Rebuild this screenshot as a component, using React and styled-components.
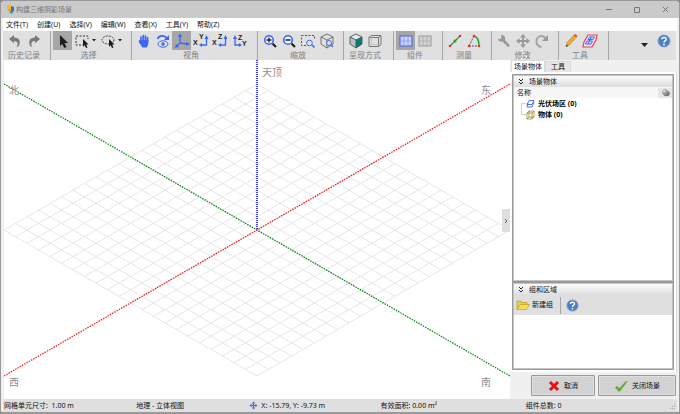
import React, { useState } from 'react';
import styled, { createGlobalStyle, css } from 'styled-components';

const GlobalStyle = createGlobalStyle`
  * { box-sizing: border-box; }
  body { margin: 0; background: #8c8c8c; }
  button, input { font: inherit; color: inherit; }
`;

const Shell = styled.div`
  min-height: 100vh;
  display: flex;
  flex-direction: column;
  border: 1px solid #999;
  border-bottom-width: 2px;
  border-radius: 5px 5px 3px 3px;
  overflow: hidden;
  background: #f0f0f0;
  color: #111;
  font: 7px/10px "Noto Sans", "Noto Sans CJK SC", sans-serif;
`;

const TitleBar = styled.header`
  display: flex;
  align-items: center;
  height: 17px;
  padding: 0 0 0 5px;
  gap: 1px;
  background: #cacaca;
  color: #777;
`;
const Title = styled.h1`
  flex: 1;
  margin: 0;
  font-size: 7px;
  font-weight: 400;
`;
const WindowButton = styled.button`
  display: grid;
  place-items: center;
  width: 27px;
  height: 17px;
  padding: 0;
  border: 0;
  background: none;
`;

const MenuBar = styled.nav`
  display: flex;
  align-items: center;
  gap: 9px;
  height: 13px;
  margin: 0 2px;
  padding: 0 3px;
  background: #fff;
`;
const MenuItem = styled.button`
  padding: 0;
  border: 0;
  background: none;
  white-space: nowrap;
  line-height: 12px;
`;

const ToolBar = styled.div`
  display: flex;
  height: 29px;
  margin: 0 3px 0 2px;
  background: #e0e0e0;
`;
const Group = styled.div`
  flex: none;
  padding: 0 ${(p) => p.$end}px 0 2px;
  border-right: 1px solid #a5a5a5;
`;
const GroupTools = styled.div`
  display: flex;
  height: 19px;
`;
const GroupLabel = styled.div`
  font-size: 8px;
  line-height: 9px;
  text-align: center;
  color: #808080;
`;
const ToolButton = styled.button`
  display: flex;
  align-items: center;
  justify-content: center;
  width: 19px;
  height: 19px;
  padding: 0;
  border: 0;
  background: none;
  ${(p) => p.$split && css`width: 26px; gap: 3px;`}
  ${(p) => p.$active && css`background: #a6a6a6;`}
`;
const ToolEnd = styled.div`
  display: flex;
  align-items: center;
  margin-left: auto;
  padding: 0 3px 10px 0;
`;

const Main = styled.main`
  flex: 1;
  display: flex;
  margin: 0 2px;
`;
const View = styled.section`
  flex: 1;
  position: relative;
  min-width: 0;
  margin-left: 1px;
  background: #fff;
`;
const Scene = styled.svg`
  display: block;
  width: 100%;
  height: 100%;
`;
const AxisName = styled.text`
  font: 10px "Noto Sans CJK SC", sans-serif;
  fill: #8e8e8e;
`;
const Collapse = styled.button`
  position: absolute;
  right: 0;
  top: 44%;
  display: grid;
  place-items: center;
  width: 8px;
  height: 23px;
  padding: 0;
  border: 0;
  background: #dedede;
`;

const Side = styled.aside`
  display: flex;
  flex-direction: column;
  width: 167px;
`;
const Tabs = styled.div`
  display: flex;
  align-items: flex-end;
  height: 12px;
  padding-left: 1px;
`;
const Tab = styled.button`
  height: ${(p) => (p.$active ? 12 : 11)}px;
  padding: 0 ${(p) => (p.$active ? 2 : 5)}px;
  border: 1px solid #dcdcdc;
  border-bottom: 0;
  background: ${(p) => (p.$active ? '#fff' : '#e6e6e6')};
  line-height: 10px;
`;
const TabPage = styled.div`
  flex: 1;
  display: flex;
  flex-direction: column;
  padding: 2px;
  background: #fff;
  border-right: 1px solid #dcdcdc;
`;
const Panel = styled.section`
  display: flex;
  flex-direction: column;
  flex: ${(p) => p.$grow} 0 0;
  border: 1px solid #999;
  outline: 1px solid #c4c4c4;
  outline-offset: -2px;
  padding: 1px;
  background: #fff;
`;
const PanelTitle = styled.h2`
  display: flex;
  align-items: center;
  gap: 5px;
  height: 11px;
  margin: 0;
  padding: 0 4px;
  font-size: 7px;
  font-weight: 400;
  background: linear-gradient(#fbfbfb, #dedede);
`;
const ColumnHead = styled.div`
  display: flex;
  justify-content: space-between;
  align-items: center;
  height: 11px;
  padding: 0 3px;
  background: #f7f7f7;
`;
const HeadMark = styled.span`
  display: grid;
  place-items: center;
  width: 14px;
  height: 10px;
  margin-right: -3px;
  background: #e6e6e6;
`;
const Tree = styled.ul`
  margin: 0 0 0 7px;
  padding: 0;
  list-style: none;
  font-weight: 700;
  color: #000;
`;
const TreeItem = styled.li`
  display: flex;
  align-items: center;
  height: 11px;
  gap: 3px;
`;
const GroupBar = styled.div`
  display: flex;
  align-items: center;
  height: 20px;
  background: #dfdfdf;
`;
const NewGroup = styled.button`
  display: flex;
  align-items: center;
  gap: 2px;
  height: 17px;
  padding: 0 7px 0 2px;
  border: 0;
  border-right: 1px solid #a5a5a5;
  background: none;
`;
const HelpButton = styled.button`
  display: grid;
  padding: 0;
  margin: 0 0 0 5px;
  border: 0;
  background: none;
`;
const Actions = styled.div`
  display: flex;
  justify-content: flex-end;
  gap: 3px;
  padding: 3px 1px 3px 0;
`;
const ActionButton = styled.button`
  display: flex;
  align-items: center;
  gap: 4px;
  height: 21px;
  padding: 0 ${(p) => p.$pad}px;
  border: 1px solid #999;
  border-radius: 1px;
  background: #d2d2d2;
  box-shadow: inset 0 0 0 1px #dfdfdf;
  white-space: nowrap;
`;

const StatusBar = styled.footer`
  display: grid;
  grid-template-columns: 132fr 113fr 131fr 145fr 151fr;
  align-items: center;
  height: 13px;
  margin: 0 2px;
  padding-left: 1px;
  background: #dfdfdf;
  white-space: nowrap;
`;
const StatusCell = styled.span`
  display: flex;
  align-items: center;
  gap: 3px;
  line-height: 12px;
`;
const Grip = styled.svg`
  margin: 3px 2px 0 auto;
`;

const BLUE = '#3b67f5';
const Svg = ({ w = 16, h = 16, box, children }) => (
  <svg width={w} height={h} viewBox={box || `0 0 ${w} ${h}`} fill="none" aria-hidden="true">
    {children}
  </svg>
);

const Logo = () => (
  <Svg w={9} h={11} box="0 0 9 11">
    <path d="M1 1h4v4H1z" fill="#f7bd28" />
    <path d="M5 2l3 1v4L5 9z" fill="#3b6fae" />
    <path d="M1 5h4v4z" fill="#ef9d17" />
    <path d="M3 8l5-2-2 4z" fill="#2c92d0" />
  </Svg>
);
const Caret = () => <Svg w={4} h={3}><path d="M0 0h4L2 2.5z" fill="#222" /></Svg>;
const Undo = ({ flip }) => (
  <Svg>
    <g transform={flip ? 'translate(16 0) scale(-1 1)' : undefined}>
      <path d="M2 6l5-4v2.6c5 .2 7 3 5 8.2l-2.4 1.8c2-4.4 1-6.6-2.6-6.7v2.3z" fill="#7a7a7a" />
    </g>
  </Svg>
);
const Pointer = ({ x = 5, y = 2, s = 1 }) => (
  <path transform={`translate(${x} ${y}) scale(${s})`} d="M0 0v11l2.3-2 2 4 2.2-1-2-4H8z" fill="#1c1c18" />
);
const Arrow = () => <Svg><Pointer /></Svg>;
const RectSelect = () => (
  <Svg w={14} h={16} box="0 0 14 16">
    <rect x="1" y="3" width="12" height="9" stroke="#333" strokeDasharray="2 1.5" />
    <path d="M8 6h6v9H8z" fill="#e0e0e0" />
    <Pointer x={8} y={6} s={0.7} />
  </Svg>
);
const EllipseSelect = () => (
  <Svg w={14} h={16} box="0 0 14 16">
    <ellipse cx="7" cy="7" rx="6" ry="4" stroke="#444" strokeDasharray="2 1" />
    <path d="M8 7h4v8H8z" fill="#e0e0e0" />
    <Pointer x={8} y={6} s={0.7} />
  </Svg>
);
const Hand = () => (
  <Svg>
    <path d="M5 8V4M7.2 7.5V2.500M9.400 7.500V3M11.500 8.500V4.500M5 10L3.500 8" stroke={BLUE} strokeWidth="1.700" strokeLinecap="round" />
    <path d="M4.200 7h8.100v4l-1.500 3.500H6.500L3 9.500z" fill={BLUE} />
  </Svg>
);
const Orbit = () => (
  <Svg>
    <path d="M2.500 6c1.500-4 7.500-4 9-1" stroke={BLUE} strokeWidth="1.800" />
    <path d="M14 2v5H9z" fill={BLUE} />
    <ellipse cx="8" cy="11" rx="5" ry="3.200" stroke={BLUE} />
    <circle cx="8" cy="11" r="1.700" fill={BLUE} />
  </Svg>
);
const Axes = () => (
  <Svg>
    <path d="M6 3v7l8 1M6 10l-3 3" stroke={BLUE} strokeWidth="1.300" />
    <path d="M6 0L4 4h4zM16 11l-4-2v4zM1 15l1-4 3 3z" fill={BLUE} />
  </Svg>
);
const axisText = { fontFamily: 'Liberation Sans, sans-serif', fontWeight: 700, fill: '#222' };
const PlaneAxes = ({ a, b, left }) => (
  <Svg>
    {left ? (
      <>
        <path d="M4 5v7h5" stroke={BLUE} strokeWidth="1.300" />
        <path d="M4 2L2 6h4zM11 12l-3-2v4z" fill={BLUE} />
        <text x="7" y="7" fontSize="7" {...axisText}>{a}</text>
        <text x="11" y="13" fontSize="7" {...axisText}>{b}</text>
      </>
    ) : (
      <>
        <path d="M13.500 5v7H8" stroke={BLUE} strokeWidth="1.300" />
        <path d="M13.500 2l-2 4h4zM6 12l3-2v4z" fill={BLUE} />
        <text x="6" y="6" fontSize="7" {...axisText}>{a}</text>
        <text x="0" y="12" fontSize="7" {...axisText}>{b}</text>
      </>
    )}
  </Svg>
);
const Zoom = ({ plus }) => (
  <Svg>
    <path d="M10.500 10.500l3.500 3.500" stroke="#222" strokeWidth="2.200" />
    <circle cx="7" cy="7" r="4.300" stroke={BLUE} strokeWidth="1.600" fill="#f0f3ff" />
    <path d={plus ? 'M4.500 7h5M7 4.500v5' : 'M4.500 7h5'} stroke="#222" strokeWidth="1.300" />
  </Svg>
);
const ZoomArea = () => (
  <Svg>
    <rect x="1.500" y="2.500" width="13" height="10" stroke="#555" strokeDasharray="2 1.500" />
    <path d="M6 7h9v8H6z" fill="#e0e0e0" />
    <circle cx="9.500" cy="10" r="2.800" stroke={BLUE} fill="#e8edff" />
    <path d="M12 12l2.500 2.500" stroke={BLUE} strokeWidth="1.600" />
  </Svg>
);
const ZoomBox = () => (
  <Svg>
    <path d="M2 4l6-3 6 3v7l-6 4-6-4zM2 4l6 3 6-3M8 7v8" stroke="#666" strokeWidth=".9" />
    <circle cx="10" cy="10" r="2.500" stroke={BLUE} fill="#dce4ff" />
    <path d="M12 12l2 2" stroke={BLUE} strokeWidth="1.500" />
  </Svg>
);
const SolidCube = () => (
  <Svg>
    <path d="M2 4l6-3 6 3-6 3z" fill="#e4e8e7" />
    <path d="M2 4l6 3v8l-6-4z" fill="#b2c3c1" />
    <path d="M8 7l6-3v7l-6 4z" fill="#087c77" />
    <path d="M2 4l6-3 6 3v7l-6 4-6-4zM2 4l6 3 6-3M8 7v8" stroke="#334b49" strokeWidth=".8" />
  </Svg>
);
const WireCube = () => (
  <Svg>
    <path d="M2 4.500h9.500v9H2zM2 4.500l2-2h10v9l-2.500 2M11.500 4.500l2.500-2" stroke="#777" />
    <path d="M4.500 3v8.500h9M2.500 13.500l2-2" stroke="#bbb" strokeWidth=".8" />
  </Svg>
);
const GridIcon = ({ on }) => (
  <Svg>
    <rect x="2" y="3" width="12" height="10" fill={on ? '#c9d2ff' : '#d2d2d2'} stroke={on ? '#4761d8' : '#999'} />
    <path d="M2 8h12M6 3v10M10 3v10" stroke={on ? '#8c9df0' : '#aaa'} strokeWidth=".8" />
  </Svg>
);
const Distance = () => (
  <Svg>
    <path d="M3 13L13 3" stroke="#2b9a38" strokeWidth="1.200" />
    <circle cx="8" cy="8" r="1.500" fill="#2b9a38" />
    <circle cx="3" cy="13" r="1.300" fill="#ef2f2f" /><circle cx="13" cy="3" r="1.300" fill="#ef2f2f" />
  </Svg>
);
const Angle = () => (
  <Svg>
    <path d="M3 13l5-10M3 13h10" stroke="#555" strokeDasharray="2 1" />
    <path d="M8 3c4 1 5 5 5 10" stroke="#2b9a38" strokeWidth="1.400" />
    <circle cx="8" cy="3" r="1.300" fill="#ef2f2f" /><circle cx="3" cy="13" r="1.300" fill="#ef2f2f" /><circle cx="13" cy="13" r="1.300" fill="#ef2f2f" />
  </Svg>
);
const Wrench = () => (
  <Svg>
    <path d="M5 2l.5 3-2 1.500L2 5c0 3 2 4.500 4.500 3.500L12 14l2-1.500-5-5.500c1-3-1-5-4-5z" fill="#999" />
  </Svg>
);
const Move = ({ color = '#999', size = 16 }) => (
  <Svg w={size} h={size} box="0 0 16 16">
    <path d="M8 3v10M3 8h10" stroke={color} strokeWidth="1.800" />
    <path d="M8 1L5 4.500h6zM8 15l-3-3.500h6zM1 8l3.500-3v6zM15 8l-3.500-3v6z" fill={color} />
  </Svg>
);
const Rotate = () => (
  <Svg>
    <path d="M7.500 14c-7-.5-6.500-11 0-11 2 0 3.500 1.500 4.500 3" stroke="#a5a5a5" strokeWidth="2" />
    <path d="M14 2v6H8z" fill="#999" />
  </Svg>
);
const Pencil = () => (
  <Svg>
    <path d="M3 13.500l1-4L11 2l2.500 2L6.500 12z" fill="#efac32" stroke="#b67b2a" strokeWidth=".6" />
    <path d="M10.500 2.500l1.500-1.500 2.500 2-1 1.500z" fill="#d45a49" />
    <path d="M3 14l.5-2.500L5 13z" fill="#333" />
  </Svg>
);
const Zones = () => (
  <Svg>
    <path d="M6 2h9l-1 5-4 7H1l1-5z" stroke="#f0404a" fill="#e6e4f4" strokeWidth="1.200" />
    <path d="M7.500 4h5l-1.500 2.500H6zM5 8h5.500L9 11H3.500zM8.500 6.500L7 8M9.500 4L8 6.500M7.500 8L6 11" stroke={BLUE} />
  </Svg>
);
const Help = ({ size = 14 }) => (
  <Svg w={size} h={size} box="0 0 14 14">
    <circle cx="7" cy="7" r="6" fill="#4a80bf" stroke="#78a0cf" />
    <path d="M4.800 5.300C5 2.700 9.500 3 9.200 5.400 9 6.800 7 6.900 7 8.500" stroke="#fff" strokeWidth="1.500" />
    <circle cx="7" cy="10.500" r=".9" fill="#fff" />
  </Svg>
);
const Chevrons = () => <Svg w={6} h={7}><path d="M1 1l2 2 2-2M1 4l2 2 2-2" stroke="#222" /></Svg>;
const Ball = () => (
  <Svg w={9} h={9}>
    <ellipse cx="5.500" cy="5.500" rx="3.300" ry="2.700" fill="#777" /><circle cx="4" cy="4" r="2.800" fill="#999" /><circle cx="3.300" cy="3.200" r="1.300" fill="#ddd" />
  </Svg>
);
const TreeIcon = ({ box }) => (
  <Svg w={14} h={11}>
    <path d={box ? 'M.5 0v5.500H5' : 'M5 5.500H.5V11'} stroke="#ccc" />
    {box
      ? <path d="M6 4h5v6H6zM6 4l2-2h5v6l-2 2M11 4l2-2M8 2v6l-2 2M8 8h5" stroke="#9b8a2d" strokeWidth=".8" />
      : <path d="M8 2.500h5l-2 4H6zM7 5l-1 4h5l2-5" stroke={BLUE} strokeWidth=".9" />}
  </Svg>
);
const Folder = () => (
  <Svg w={14} h={12}>
    <path d="M1 10V2h4l1 1.500h5V6" fill="#e3d04c" stroke="#b8a12c" strokeWidth=".8" />
    <path d="M1 10.500L4 5.500h9.500l-3 5z" fill="#f2e052" stroke="#c0aa2b" strokeWidth=".8" />
  </Svg>
);
const Cross = () => (
  <Svg w={12} h={12}><path d="M2 2l8 8M10 2l-8 8" stroke="#e01414" strokeWidth="3" /></Svg>
);
const Check = () => (
  <Svg w={14} h={12}><path d="M1 7.500l2-1.500L5.500 8 12 1l1.500.5L6 11.500H4.500z" fill="#67ab3c" /></Svg>
);

const GROUPS = [
  { label: '历史记录', end: 7, tools: [['撤销', <Undo />], ['重做', <Undo flip />]] },
  { label: '选择', end: 7, tools: [['指针', <Arrow />, 'active'], ['矩形选择', <RectSelect />, 'split'], ['椭圆选择', <EllipseSelect />, 'split']] },
  { label: '视角', end: 9, tools: [['平移', <Hand />], ['环绕', <Orbit />], ['立体', <Axes />, 'active'], ['XY', <PlaneAxes a="Y" b="X" />], ['XZ', <PlaneAxes a="Z" b="X" />], ['ZY', <PlaneAxes a="Z" b="Y" left />]] },
  { label: '缩放', end: 7, tools: [['放大', <Zoom plus />], ['缩小', <Zoom />], ['框选缩放', <ZoomArea />], ['全部', <ZoomBox />]] },
  { label: '呈现方式', end: 9, tools: [['实体', <SolidCube />], ['线框', <WireCube />]] },
  { label: '组件', end: 8, tools: [['组件', <GridIcon on />, 'active'], ['布局', <GridIcon />]] },
  { label: '测量', end: 8, tools: [['距离', <Distance />], ['角度', <Angle />]] },
  { label: '修改', end: 7, tools: [['修改', <Wrench />], ['移动', <Move />], ['旋转', <Rotate />]] },
  { label: '工具', end: 9, tools: [['绘制', <Pencil />], ['区域', <Zones />]] },
];
const MENUS = ['文件(T)', '创建(U)', '选择(V)', '编辑(W)', '查看(X)', '工具(Y)', '帮助(Z)'];

const CELLS = 22;
const gridPath = Array.from({ length: CELLS + 1 }, (_, i) => {
  const x = (253 * i) / CELLS;
  const y = (146 * i) / CELLS;
  return `M${253 - x} ${24 + y}L${506 - x} ${170 + y}M${253 + x} ${24 + y}L${x} ${170 + y}`;
}).join('');

const SceneView = () => (
  <View aria-label="场景">
    <Scene viewBox="0 0 506 339" preserveAspectRatio="xMidYMid slice">
      <path d={gridPath} stroke="#e6e6e6" strokeWidth="1" />
      <path d="M253 0V169" stroke="#3c3cf0" strokeWidth="2" strokeDasharray="1 1" />
      <path d="M0 24L506 316" stroke="#168a1c" strokeWidth="1.300" strokeDasharray="1.500 1.100" />
      <path d="M0 316L506 24" stroke="#f42222" strokeWidth="1.300" strokeDasharray="1.500 1.100" />
      <AxisName x="258" y="16">天顶</AxisName>
      <AxisName x="5" y="34">北</AxisName>
      <AxisName x="477" y="34">东</AxisName>
      <AxisName x="5" y="326">西</AxisName>
      <AxisName x="477" y="326">南</AxisName>
    </Scene>
    <Collapse aria-label="收起侧栏">
      <Svg w={4} h={6}><path d="M1 1l2 2-2 2" stroke="#666" /></Svg>
    </Collapse>
  </View>
);

export default function App() {
  const [tab, setTab] = useState('场景物体');
  return (
    <>
      <GlobalStyle />
      <Shell>
        <TitleBar>
          <Logo />
          <Title>构建三维阴影场景</Title>
          <WindowButton aria-label="最小化"><Svg w={7} h={7}><path d="M0 3.500h6" stroke="#777" /></Svg></WindowButton>
          <WindowButton aria-label="最大化"><Svg w={7} h={7}><path d="M.5 1.500h5v5h-5z" stroke="#777" /></Svg></WindowButton>
          <WindowButton aria-label="关闭"><Svg w={7} h={7}><path d="M1 1l5 5M6 1L1 6" stroke="#777" /></Svg></WindowButton>
        </TitleBar>
        <MenuBar>{MENUS.map((m) => <MenuItem key={m}>{m}</MenuItem>)}</MenuBar>
        <ToolBar role="toolbar">
          {GROUPS.map((g) => (
            <Group key={g.label} $end={g.end}>
              <GroupTools>
                {g.tools.map(([name, icon, kind]) => (
                  <ToolButton key={name} aria-label={name} $active={kind === 'active'} $split={kind === 'split'}>
                    {icon}
                    {kind === 'split' && <Caret />}
                  </ToolButton>
                ))}
              </GroupTools>
              <GroupLabel>{g.label}</GroupLabel>
            </Group>
          ))}
          <ToolEnd>
            <ToolButton aria-label="更多"><Svg w={7} h={12}><path d="M0 8h7L3.500 12z" fill="#222" /></Svg></ToolButton>
            <ToolButton aria-label="帮助"><Help /></ToolButton>
          </ToolEnd>
        </ToolBar>
        <Main>
          <SceneView />
          <Side>
            <Tabs role="tablist">
              {['场景物体', '工具'].map((t) => (
                <Tab key={t} role="tab" aria-selected={t === tab} $active={t === tab} onClick={() => setTab(t)}>{t}</Tab>
              ))}
            </Tabs>
            <TabPage>
              <Panel $grow={214}>
                <PanelTitle><Chevrons />场景物体</PanelTitle>
                <ColumnHead>名称<HeadMark><Ball /></HeadMark></ColumnHead>
                <Tree>
                  <TreeItem><TreeIcon />光伏场区 (0)</TreeItem>
                  <TreeItem><TreeIcon box />物体 (0)</TreeItem>
                </Tree>
              </Panel>
              <Panel $grow={88}>
                <PanelTitle><Chevrons />组和区域</PanelTitle>
                <GroupBar>
                  <NewGroup><Folder />新建组</NewGroup>
                  <HelpButton aria-label="帮助"><Help size={13} /></HelpButton>
                </GroupBar>
              </Panel>
            </TabPage>
            <Actions>
              <ActionButton $pad={16}><Cross />取消</ActionButton>
              <ActionButton $pad={15}><Check />关闭场景</ActionButton>
            </Actions>
          </Side>
        </Main>
        <StatusBar>
          <StatusCell>网格单元尺寸:&nbsp; 1.00 m</StatusCell>
          <StatusCell>地理 - 立体视图</StatusCell>
          <StatusCell><Move color={BLUE} size={9} />X: -15.79, Y: -9.73 m</StatusCell>
          <StatusCell>有效面积: 0.00 m²</StatusCell>
          <StatusCell>组件总数: 0
            <Grip width="6" height="6" aria-hidden="true"><path d="M5 0h1v1H5zM3 2h1v1H3zM5 2h1v1H5zM1 4h1v1H1zM3 4h1v1H3zM5 4h1v1H5z" fill="#aaa" /></Grip>
          </StatusCell>
        </StatusBar>
      </Shell>
    </>
  );
}
